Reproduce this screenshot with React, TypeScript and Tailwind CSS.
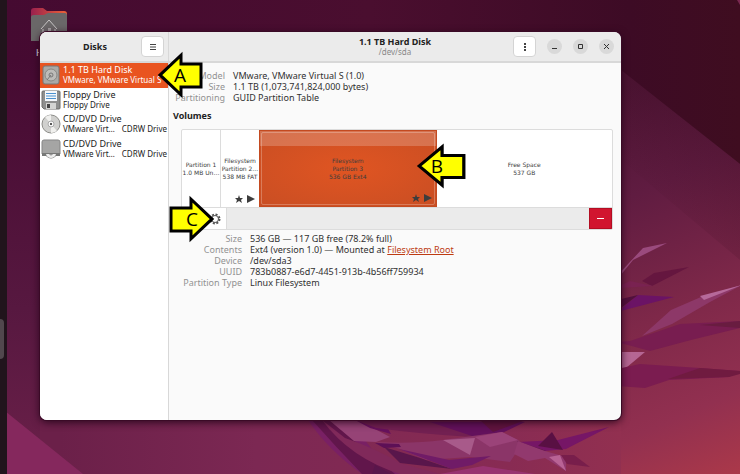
import type { ReactNode } from "react";

const UI_FONT = "font-['Noto_Sans','Open_Sans',sans-serif]";

function Wallpaper() {
  return (
    <svg
      className="absolute inset-0 h-full w-full"
      viewBox="0 0 740 474"
      preserveAspectRatio="none"
      aria-hidden="true"
    >
      <defs>
        <linearGradient id="sky" gradientUnits="userSpaceOnUse" x1="0" y1="0" x2="740" y2="0">
          <stop offset="0" stopColor="#450a31" />
          <stop offset="0.5" stopColor="#4a0e2f" />
          <stop offset="0.85" stopColor="#3d0b25" />
          <stop offset="1" stopColor="#3f0d20" />
        </linearGradient>
        <linearGradient id="left" gradientUnits="userSpaceOnUse" x1="0" y1="60" x2="0" y2="474">
          <stop offset="0" stopColor="#450a31" />
          <stop offset="0.6" stopColor="#571840" />
          <stop offset="1" stopColor="#6b2049" />
        </linearGradient>
        <linearGradient id="dune" gradientUnits="userSpaceOnUse" x1="600" y1="100" x2="760" y2="470">
          <stop offset="0" stopColor="#4d1434" />
          <stop offset="0.25" stopColor="#601c41" />
          <stop offset="0.55" stopColor="#7e2849" />
          <stop offset="0.8" stopColor="#923050" />
          <stop offset="1" stopColor="#ac3949" />
        </linearGradient>
        <linearGradient id="floor" gradientUnits="userSpaceOnUse" x1="60" y1="0" x2="621" y2="0">
          <stop offset="0" stopColor="#6b2049" />
          <stop offset="0.35" stopColor="#7c2853" />
          <stop offset="0.8" stopColor="#882b53" />
          <stop offset="1" stopColor="#923050" />
        </linearGradient>
        <linearGradient id="shade" x1="0" y1="1" x2="1" y2="0">
          <stop offset="0.2" stopColor="#3d0b20" stopOpacity="0" />
          <stop offset="1" stopColor="#3d0b20" stopOpacity="0.4" />
        </linearGradient>
      </defs>
      <rect width="740" height="474" fill="url(#sky)" />
      <rect y="60" width="300" height="414" fill="url(#left)" />
      <rect x="40" y="400" width="600" height="74" fill="url(#floor)" />
      <path d="M621 70 740 164V474H621Z" fill="url(#dune)" />
      <path d="M621 70 740 164V260L621 160Z" fill="url(#shade)" />
      <path d="M0 407 83 474H0Z" fill="#85285d" />
      <path d="M737 0H740V5Z" fill="#7a2850" />

      <path d="M308 420H350L380 460 420 474H362Q328 450 308 420Z" fill="#792064" />
      <path d="M312 420H330L365 450 395 474H362Q336 447 312 420Z" fill="#61164b" />
      <path d="M322 420 345 438Q375 448 400 463L440 474H400Q350 458 322 420Z" fill="#80295a" />
      <path d="M329 420H358L390 437 376 442 354 441Z" fill="#964376" />
      <path d="M355 420 386 425 391 434 370 428Z" fill="#67115d" />
      <path d="M358 421H525L472 437Q420 434 376 428Z" fill="#722051" />
      <path d="M430 422H525L500 434 475 437Z" fill="#63115c" />
      <path d="M480 420H525L493 432Z" fill="#60143e" />
      <path d="M376 442Q412 444 443 440L502 432 520 441 518 450 510 462 470 457 426 460 400 449Z" fill="#8b3568" />
      <path d="M375 443 399 444 401 447 384 448Z" fill="#5d1056" />
      <path d="M384 447 420 458 452 469 400 463Z" fill="#59164b" />
      <path d="M399 449 449 460 491 456 472 465 452 469Z" fill="#701b67" />
      <path d="M443 440 475 438 470 455Z" fill="#a85a8a" />
      <path d="M475 437 502 432 518 440 490 447Z" fill="#9b4379" />
      <path d="M518 442 558 440 609 427 566 449 545 451Z" fill="#761666" />
      <path d="M538 446 552 432 563 450Z" fill="#591043" />
      <path d="M517 441 546 451 528 449Z" fill="#50103c" />
      <path d="M518 441 545 451 566 457 566 471 545 458 528 461 514 454Z" fill="#92396e" />
      <path d="M549 457 560 455 566 471Z" fill="#b96395" />
      <path d="M561 455 574 455 590 467 567 464Z" fill="#781e4b" />
      <path d="M375 465 391 474H372Z" fill="#59164b" />
      <path d="M440 474 483 466 535 474Z" fill="#983370" />

      <path d="M615 278 643 248 667 243 633 260 620 276Z" fill="#9a4a7d" />
      <path d="M642 281 654 273 689 267 652 286Z" fill="#65163f" />
      <path d="M617 287 630 281 653 286 621 288Z" fill="#792251" />
      <path d="M617 312 638 295 674 297Z" fill="#6b1365" />
      <path d="M617 300 638 295 621 308Z" fill="#51103c" />
      <path d="M642 336 671 310 701 297 742 285 710 302 672 324Z" fill="#8d3868" />
      <path d="M700 296 742 285 704 300Z" fill="#b6699a" />
      <path d="M617 342 630 341 680 324 740 321V328L691 340 650 351Z" fill="#781d50" />
      <path d="M700 325 740 321V328Z" fill="#691c40" />
      <path d="M617 352H645L620 373Z" fill="#b56693" />
      <path d="M617 369 640 364 700 368 740 371 729 377 669 380 645 388 617 386Z" fill="#7b1c50" />
      <path d="M668 379 700 368 740 371V374L729 377Z" fill="#701b40" />
    </svg>
  );
}

function HomeFolder() {
  return (
    <div className="absolute top-2 left-[30px] w-10 text-[9px] text-white">
      <svg className="h-[36px] w-[38px]" viewBox="0 0 38 36" aria-hidden="true">
        <defs>
          <linearGradient id="folder">
            <stop offset="0" stopColor="#99204e" />
            <stop offset="1" stopColor="#ed6137" />
          </linearGradient>
        </defs>
        <path d="M1 3Q1 0 4 0H13L17 3H34Q37 3 37 6V20H1Z" fill="url(#folder)" />
        <path d="M1 9Q1 7 4 7H14L18 5H35Q37 5 37 8V33H1Z" fill="#6a6768" />
        <path d="m11 21 8-9 8 9m-14 0v10h12V21" fill="none" stroke="#c7c5c5" />
        <path d="M18 20H21V31H18Z" fill="#a5a2a3" />
      </svg>
      <span className="block pl-[6px] leading-[18px]">Home</span>
    </div>
  );
}

function DriveIcon({ kind }: { kind: "disk" | "floppy" | "cd" | "dvd" }) {
  return (
    <svg className="h-[20px] w-[20px] shrink-0" viewBox="0 0 20 20" aria-hidden="true">
      {kind === "disk" && (
        <>
          <rect x="2" y="1" width="16" height="18" rx="2" fill="#aaa9a6" stroke="#777" />
          <circle cx="10" cy="10" r="6" fill="#bdbcb9" stroke="#898884" />
          <circle cx="10" cy="10" r="2" fill="none" stroke="#777" />
          <path d="m10 10-4 5" stroke="#777" />
        </>
      )}
      {kind === "floppy" && (
        <>
          <path d="M2 1H18Q19 1 19 2V18Q19 19 18 19H3L1 17V2Q1 1 2 1Z" fill="#8e8f8e" stroke="#6c6d6b" />
          <path d="M4 1H16V11H4Z" fill="#f5f8fb" />
          <path d="M5 3.500H15M5 6H15M5 8.500H15" stroke="#4b91cf" />
          <path d="M5 13H15V19H5Z" fill="#d4d5d3" />
          <path d="M6 14H9V18H6Z" fill="#444" />
        </>
      )}
      {kind === "cd" && (
        <>
          <circle cx="10" cy="10" r="9" fill="#d0d0ce" stroke="#8c8c88" />
          <path d="M10 10 4 3Q7 1 10 1ZM10 10 16 17Q13 19 10 19Z" fill="#f0f0ee" />
          <circle cx="10" cy="10" r="3" fill="#f8f8f8" stroke="#aaa" />
          <circle cx="10" cy="10" r="1" fill="#222" />
        </>
      )}
      {kind === "dvd" && (
        <>
          <path d="M3 1H17Q19 1 19 3V15H1V3Q1 1 3 1Z" fill="#a5a5a4" stroke="#858585" />
          <path d="M1 14H19V17H15Q10 22 5 17H1Z" fill="#777877" />
          <path d="M5 15H15Q14 19 10 19T5 15Z" fill="#eee" />
          <path d="M8 15H12Q10 18 8 15Z" fill="#999" />
        </>
      )}
    </svg>
  );
}

type Drive = { kind: "disk" | "floppy" | "cd" | "dvd"; name: string; detail: string; extra?: string };

const drives: Drive[] = [
  { kind: "disk", name: "1.1 TB Hard Disk", detail: "VMware, VMware Virtual S" },
  { kind: "floppy", name: "Floppy Drive", detail: "Floppy Drive" },
  { kind: "cd", name: "CD/DVD Drive", detail: "VMware Virt…", extra: "CDRW Drive" },
  { kind: "dvd", name: "CD/DVD Drive", detail: "VMware Virt…", extra: "CDRW Drive" },
];

function Sidebar() {
  return (
    <aside className="flex w-[129px] shrink-0 flex-col border-r border-[#d8d8d8] bg-white">
      <header className="flex h-[31px] shrink-0 items-center border-b-2 border-[#d8d8d8] bg-[#ebebeb] pr-1">
        <h2 className="flex-1 pl-[26px] text-center text-[9px] font-bold">Disks</h2>
        <button
          aria-label="Application menu"
          className="ml-[17px] flex h-[21px] w-[23px] items-center justify-center rounded-[4px] border border-[#d4d4d4] bg-white"
        >
          <svg className="h-2 w-2" viewBox="0 0 8 8" aria-hidden="true">
            <path d="M1 1.500H7M1 4H7M1 6.500H7" stroke="#444" />
          </svg>
        </button>
      </header>
      <nav className="grid h-[98px] grid-rows-4" aria-label="Drives">
        {drives.map((d, i) => (
          <button
            key={i}
            className={
              i === 0
                ? "flex items-center gap-[2px] bg-[#e95420] px-[1px] text-left text-white"
                : "flex items-center gap-[2px] px-[1px] text-left text-[#222]"
            }
          >
            <DriveIcon kind={d.kind} />
            <span className="min-w-0 flex-1 pb-[2px] whitespace-nowrap">
              <span className="block text-[9px] leading-[11px]">{d.name}</span>
              <span className="flex justify-between text-[8px] leading-[9px]">
                <span>{d.detail}</span>
                <span>{d.extra}</span>
              </span>
            </span>
          </button>
        ))}
      </nav>
    </aside>
  );
}

function Details({ rows, wide }: { rows: [string, ReactNode][]; wide?: boolean }) {
  return (
    <dl className="text-[9px] leading-[11px]">
      {rows.map(([label, value]) => (
        <div key={label} className="flex gap-2">
          <dt className={wide ? "w-[69px] shrink-0 text-right text-[#929292]" : "w-[52px] shrink-0 text-right text-[#929292]"}>
            {label}
          </dt>
          <dd className="whitespace-nowrap text-[#303030]">{value}</dd>
        </div>
      ))}
    </dl>
  );
}

function Marks() {
  return (
    <svg className="absolute right-1 bottom-1 h-2 w-5" viewBox="0 0 20 8" aria-hidden="true">
      <path d="m4 0 1 3h3L6 5l1 3-3-2-3 2 1-3L0 3h3ZM12 0 20 4 12 8Z" fill="#3d3d3d" />
    </svg>
  );
}

function Volumes() {
  const cell = "relative flex min-w-0 flex-col items-center justify-center whitespace-nowrap";
  return (
    <section className="mt-[7px] mr-1 ml-2 overflow-hidden rounded-[2px] border border-[#dcdcdc] bg-white">
      <div className="flex h-[77px] font-['DejaVu_Sans',sans-serif] text-[6px] leading-[8px] text-[#3d3d3d]">
        <button className={`${cell} w-[39px] border-r border-[#dcdcdc]`}>
          <span>Partition 1</span>
          <span>1.0 MB Un…</span>
        </button>
        <button className={`${cell} w-[38px]`}>
          <span>Filesystem</span>
          <span>Partition 2…</span>
          <span>538 MB FAT</span>
          <Marks />
        </button>
        <button
          className={`${cell} flex-1 border border-[#c34a20] bg-radial from-[#e05522] to-[#c94e23]`}
        >
          <span className="absolute inset-x-0 top-0 h-[15px] bg-white/20" />
          <span className="absolute inset-[1px] rounded-[2px] border border-white/25" />
          <span>Filesystem</span>
          <span>Partition 3</span>
          <span>536 GB Ext4</span>
          <Marks />
        </button>
        <button className={`${cell} flex-1`}>
          <span>Free Space</span>
          <span>537 GB</span>
        </button>
      </div>
      <div className="flex h-[22px] border-t border-[#dcdcdc] bg-[#ebebeb]">
        <button aria-label="Mount" className="w-[22px] bg-white" />
        <button
          aria-label="Partition options"
          className="flex w-[23px] items-center justify-center border-r border-[#dcdcdc] bg-white"
        >
          <svg className="h-3 w-3" viewBox="0 0 12 12" aria-hidden="true">
            <circle cx="6" cy="6" r="4.500" fill="none" stroke="#555" strokeWidth="2" strokeDasharray="2 1.530" />
            <circle cx="6" cy="6" r="3.500" fill="none" stroke="#555" strokeWidth="1" />
          </svg>
        </button>
        <button
          aria-label="Delete partition"
          className="ml-auto flex w-[23px] items-center justify-center border border-[#b30d22] bg-[#d1152f]"
        >
          <span className="h-px w-[7px] bg-white" />
        </button>
      </div>
    </section>
  );
}

function WindowButton({ label, path }: { label: string; path: string }) {
  return (
    <button aria-label={label} className="flex h-[15px] w-[15px] items-center justify-center rounded-full bg-[#d9d9d9]">
      <svg className="h-[7px] w-[7px]" viewBox="0 0 7 7" aria-hidden="true">
        <path d={path} fill="none" stroke="#333" />
      </svg>
    </button>
  );
}

function Arrow({ letter, className, right }: { letter: string; className: string; right?: boolean }) {
  return (
    <div className={`absolute flex items-center justify-center ${className}`}>
      <svg className="absolute inset-0 h-full w-full" viewBox="0 0 46 46" preserveAspectRatio="none" aria-hidden="true">
        <path
          d={right ? "M2 12.500H22V4L43 23 22 42V34.500H2Z" : "M44 12.500H24V4L3 23 24 42V34.500H44Z"}
          fill="#ffff00"
          stroke="#000"
          strokeWidth="3"
        />
      </svg>
      <span className="relative font-['Open_Sans',sans-serif] text-[19px] leading-none text-black">{letter}</span>
    </div>
  );
}

export default function App() {
  return (
    <div className={`relative flex h-screen overflow-hidden pt-8 pr-[119px] pb-[54px] pl-10 ${UI_FONT}`}>
      <Wallpaper />
      <div className="absolute inset-y-0 left-0 w-[7px] bg-[#21141c]" />
      <div className="absolute top-[319px] left-0 h-10 w-1 rounded-r-[4px] bg-[#51474d]" />
      <HomeFolder />
      <main className="relative flex min-w-0 flex-1 overflow-hidden rounded-[7px] bg-[#fafafa] text-[#222] shadow-[0_0_0_1px_#3a0a26,0_2px_8px_#25051a]">
        <Sidebar />
        <div className="min-w-0 flex-1">
          <header className="relative flex h-[31px] items-center justify-end border-b-2 border-[#d8d8d8] bg-[#ebebeb] pr-[7px]">
            <div className="absolute inset-x-0 text-center">
              <h1 className="text-[9px] leading-[10px] font-bold">1.1 TB Hard Disk</h1>
              <p className="text-[8px] leading-[9px] text-[#888]">/dev/sda</p>
            </div>
            <div className="relative flex items-center gap-[11px]">
              <button
                aria-label="Drive options"
                className="flex h-[21px] w-[23px] items-center justify-center rounded-[4px] border border-[#d4d4d4] bg-white"
              >
                <svg className="h-2 w-2" viewBox="0 0 8 8" aria-hidden="true">
                  <path d="M3 0H5V2H3ZM3 3H5V5H3ZM3 6H5V8H3Z" fill="#444" />
                </svg>
              </button>
              <WindowButton label="Minimize" path="M1 5.500H6" />
              <WindowButton label="Maximize" path="M1.500 1.500H5.500V5.500H1.500Z" />
              <WindowButton label="Close" path="M1 1 6 6M6 1 1 6" />
            </div>
          </header>
          <div className="px-1 pt-[7px]">
            <Details
              rows={[
                ["Model", "VMware, VMware Virtual S (1.0)"],
                ["Size", "1.1 TB (1,073,741,824,000 bytes)"],
                ["Partitioning", "GUID Partition Table"],
              ]}
            />
            <h3 className="mt-[7px] text-[9px] leading-[12px] font-bold">Volumes</h3>
            <Volumes />
            <div className="pt-[3px]">
              <Details
                wide
                rows={[
                  ["Size", "536 GB — 117 GB free (78.2% full)"],
                  [
                    "Contents",
                    <>
                      Ext4 (version 1.0) — Mounted at{" "}
                      <a href="#root" className="text-[#bd3b12] underline">
                        Filesystem Root
                      </a>
                    </>,
                  ],
                  ["Device", "/dev/sda3"],
                  ["UUID", "783b0887-e6d7-4451-913b-4b56ff759934"],
                  ["Partition Type", "Linux Filesystem"],
                ]}
              />
            </div>
          </div>
        </div>
      </main>
      <Arrow letter="A" className="top-[51px] left-[157px] h-[48px] w-[46px]" />
      <Arrow letter="B" className="top-[143px] left-[416px] h-[46px] w-[50px] pr-2" />
      <Arrow letter="C" className="top-[195px] left-[169px] h-[48px] w-[46px]" right />
    </div>
  );
}
